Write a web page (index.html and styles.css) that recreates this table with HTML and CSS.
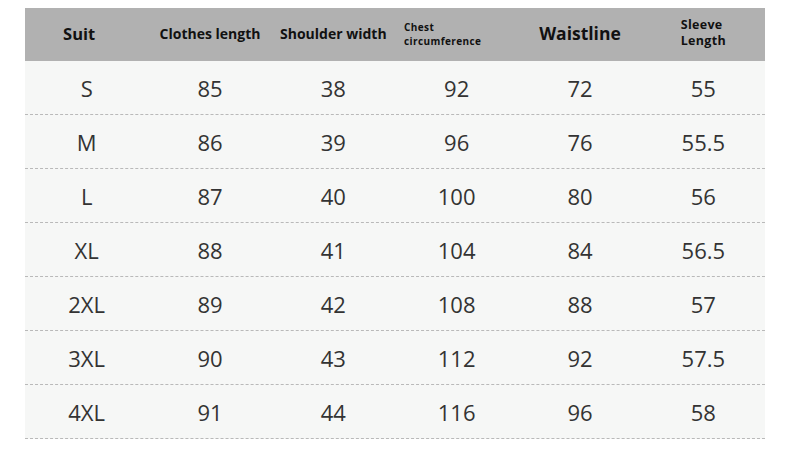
FILE: index.html
```html
<!DOCTYPE html>
<html>
<head>
<meta charset="utf-8">
<link rel="stylesheet" href="styles.css">
</head>
<body>
<div class="chart">
  <div class="head">
    <div class="hc suit">Suit</div>
    <div class="hc">Clothes length</div>
    <div class="hc">Shoulder width</div>
    <div class="hc chest">Chest<br>circumference</div>
    <div class="hc waist">Waistline</div>
    <div class="hc sleeve"><span>Sleeve<br>Length</span></div>
  </div>
  <div class="row"><div>S</div><div>85</div><div>38</div><div>92</div><div>72</div><div>55</div></div>
  <div class="row"><div>M</div><div>86</div><div>39</div><div>96</div><div>76</div><div>55.5</div></div>
  <div class="row"><div>L</div><div>87</div><div>40</div><div>100</div><div>80</div><div>56</div></div>
  <div class="row"><div>XL</div><div>88</div><div>41</div><div>104</div><div>84</div><div>56.5</div></div>
  <div class="row"><div>2XL</div><div>89</div><div>42</div><div>108</div><div>88</div><div>57</div></div>
  <div class="row"><div>3XL</div><div>90</div><div>43</div><div>112</div><div>92</div><div>57.5</div></div>
  <div class="row"><div>4XL</div><div>91</div><div>44</div><div>116</div><div>96</div><div>58</div></div>
</div>
</body>
</html>
```
FILE: styles.css
```css
html, body {
  margin: 0;
  padding: 0;
  background: #ffffff;
}
body {
  padding: 8px 25px 0 25px;
  font-family: "Open Sans", "Noto Sans", sans-serif;
}
.chart {
  width: 740px;
}
.head {
  display: grid;
  grid-template-columns: repeat(6, 1fr);
  height: 53px;
  background: #b1b1b1;
  align-items: center;
}
.hc {
  font-weight: 700;
  font-size: 14px;
  color: #111;
  text-align: center;
  letter-spacing: 0;
  margin-top: -2px;
}
.hc.suit {
  font-size: 16.5px;
  padding-right: 15px;
}
.hc.chest {
  text-align: left;
  font-size: 10px;
  line-height: 14px;
  padding-left: 9px;
  letter-spacing: 0.4px;
  margin-top: -2px;
}
.hc.waist {
  font-size: 17.5px;
  letter-spacing: 0;
  margin-top: -4px;
}
.hc.sleeve {
  text-align: center;
  font-size: 12.5px;
  line-height: 16px;
  letter-spacing: 0.3px;
  margin-top: -3px;
}
.hc.sleeve span {
  display: inline-block;
  text-align: left;
}
.row {
  display: grid;
  grid-template-columns: repeat(6, 1fr);
  height: 53px;
  background: #f6f7f6;
  border-bottom: 1px dashed #b9b9b9;
  align-items: center;
  text-align: center;
  font-size: 22px;
  color: #333;
}
```
